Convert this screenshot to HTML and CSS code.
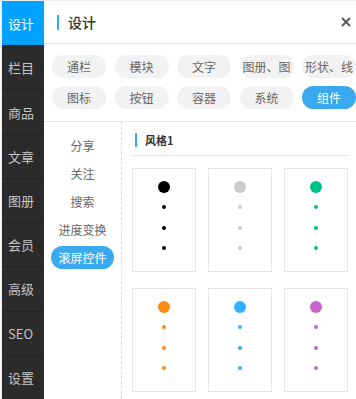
FILE: index.html
```html
<!DOCTYPE html>
<html lang="zh">
<head>
<meta charset="utf-8">
<title>设计</title>
<link rel="stylesheet" href="styles.css">
</head>
<body>
<div class="app">
  <nav class="sidebar">
    <div class="side-item active">设计</div>
    <div class="side-item">栏目</div>
    <div class="side-item">商品</div>
    <div class="side-item">文章</div>
    <div class="side-item">图册</div>
    <div class="side-item">会员</div>
    <div class="side-item">高级</div>
    <div class="side-item">SEO</div>
    <div class="side-item">设置</div>
  </nav>
  <main class="main">
    <header class="header">
      <div class="title"><span class="bar"></span><span class="title-text">设计</span></div>
      <svg class="close" width="10" height="10" viewBox="0 0 10 10"><path d="M1 1 L9 9 M9 1 L1 9" stroke="#555" stroke-width="1.8" fill="none"/></svg>
    </header>
    <div class="tabs">
      <div class="tab">通栏</div>
      <div class="tab">模块</div>
      <div class="tab">文字</div>
      <div class="tab">图册、图</div>
      <div class="tab">形状、线</div>
      <div class="tab">图标</div>
      <div class="tab">按钮</div>
      <div class="tab">容器</div>
      <div class="tab">系统</div>
      <div class="tab active">组件</div>
    </div>
    <div class="body">
      <div class="subnav">
        <div class="sub-item">分享</div>
        <div class="sub-item">关注</div>
        <div class="sub-item">搜索</div>
        <div class="sub-item">进度变换</div>
        <div class="sub-item active">滚屏控件</div>
      </div>
      <div class="content">
        <div class="section-title"><span class="sbar"></span><span>风格1</span></div>
        <div class="cards">
          <div class="card c-black"><span class="big"></span><span class="dot"></span><span class="dot"></span><span class="dot"></span></div>
          <div class="card c-gray"><span class="big"></span><span class="dot"></span><span class="dot"></span><span class="dot"></span></div>
          <div class="card c-green"><span class="big"></span><span class="dot"></span><span class="dot"></span><span class="dot"></span></div>
          <div class="card c-orange"><span class="big"></span><span class="dot"></span><span class="dot"></span><span class="dot"></span></div>
          <div class="card c-blue"><span class="big"></span><span class="dot"></span><span class="dot"></span><span class="dot"></span></div>
          <div class="card c-purple"><span class="big"></span><span class="dot"></span><span class="dot"></span><span class="dot"></span></div>
        </div>
      </div>
    </div>
  </main>
</div>
</body>
</html>
```

FILE: styles.css
```css
* { box-sizing: border-box; }
html, body { margin: 0; padding: 0; background: #fff; }
body {
  font-family: "Noto Sans CJK SC", "Noto Sans", sans-serif;
  width: 356px;
  height: 399px;
  overflow: hidden;
}
.app {
  display: flex;
  height: 399px;
  border-top: 1px solid #ececec;
  border-left: 2px solid #f2f2f2;
}
.sidebar {
  width: 42px;
  flex: none;
  background: #2b2b2b;
  display: grid;
  grid-template-rows: repeat(9, 1fr);
}
.side-item {
  display: flex;
  align-items: center;
  padding-left: 6px;
  font-size: 13px;
  color: #c4c4c4;
  border-top: 1px solid #222;
}
.side-item:first-child { border-top: none; }
.side-item.active { background: #00a2ff; color: #fff; }
.main {
  flex: 1;
  min-width: 0;
  display: flex;
  flex-direction: column;
  overflow: hidden;
}
.header {
  height: 43px;
  flex: none;
  border-bottom: 1px solid #e3e3e3;
  display: flex;
  align-items: center;
  justify-content: space-between;
  padding: 0 5px 0 13px;
}
.title { display: flex; align-items: center; }
.bar { width: 2px; height: 15px; background: #3aa9ef; margin-right: 9px; }
.title-text { font-size: 14px; color: #333; font-weight: 500; }
.close { display: block; margin-top: -1px; }
.tabs {
  flex: none;
  display: grid;
  grid-template-columns: repeat(5, 54px);
  column-gap: 8.5px;
  row-gap: 8px;
  padding: 11px 0 12px 8px;
  border-bottom: 1px solid #e6e6e6;
}
.tab {
  height: 23px;
  border-radius: 12px;
  background: #f2f2f2;
  color: #666;
  font-size: 12px;
  line-height: 23px;
  text-align: center;
  white-space: nowrap;
  padding: 0 3px;
}
.tab.active { background: #3aa9ef; color: #fff; }
.body { flex: 1; display: flex; min-height: 0; }
.subnav {
  width: 78px;
  flex: none;
  border-right: 1px dashed #dcdcdc;
  padding: 10px 7px 0 7px;
  display: flex;
  flex-direction: column;
  align-items: stretch;
}
.sub-item {
  height: 28px;
  line-height: 28px;
  text-align: center;
  font-size: 12px;
  color: #666;
}
.sub-item.active {
  height: 23px;
  line-height: 23px;
  margin-top: 2px;
  background: #3aa9ef;
  color: #fff;
  border-radius: 12px;
}
.content { flex: 1; padding: 0 7px 0 10px; }
.section-title {
  height: 34px;
  display: flex;
  align-items: center;
  padding-left: 3px;
  padding-top: 2px;
  border-bottom: 1px solid #e6e6e6;
  font-size: 11px;
  font-weight: bold;
  color: #333;
}
.sbar { width: 2px; height: 14px; background: #3aa9ef; margin-right: 8px; }
.cards {
  display: grid;
  grid-template-columns: repeat(3, 64px);
  column-gap: 12px;
  row-gap: 16px;
  margin-top: 12px;
}
.card {
  height: 104px;
  border: 1px solid #e3e3e3;
  display: flex;
  flex-direction: column;
  align-items: center;
  padding-top: 12px;
}
.big { width: 12px; height: 12px; border-radius: 50%; margin-bottom: 12px; }
.dot { width: 4px; height: 4px; border-radius: 50%; margin-bottom: 16.5px; }
.c-black span { background: #000; }
.c-gray span { background: #cccccc; }
.c-green span { background: #00c28c; }
.c-orange span { background: #ff8a14; }
.c-blue span { background: #2eb2ff; }
.c-purple span { background: #c864cf; }
```
